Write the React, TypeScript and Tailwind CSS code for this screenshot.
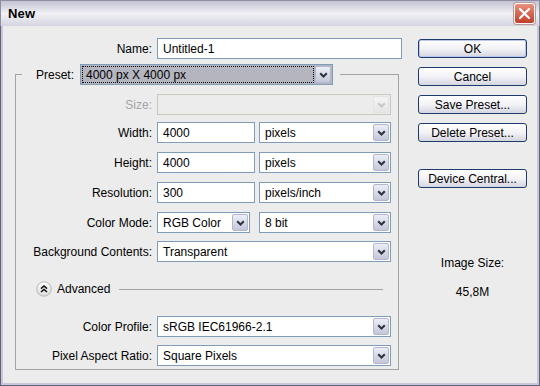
const Chevron = ({ disabled = false }: { disabled?: boolean }) => (
    <svg width="9" height="6" viewBox="0 0 9 6">
        <path d="M1.2 1.2 4.5 4.5 7.8 1.2" fill="none" stroke={disabled ? "#c6c6c6" : "#2f3140"} strokeWidth="2" />
    </svg>
);

const Select = ({
    value,
    className = "",
    disabled = false,
    focused = false,
}: {
    value?: string;
    className?: string;
    disabled?: boolean;
    focused?: boolean;
}) => {
    const frame = disabled ? "border-[#cac8bb] bg-[#ececec]" : focused ? "border-[#7f9db9] bg-[#b4b5be]" : "border-[#7f9db9] bg-white";
    const button = disabled
        ? "border-[#e2e2e2] bg-gradient-to-b from-[#f4f4f4] to-[#e6e6e6]"
        : "border-[#b3b6cc] bg-gradient-to-b from-[#eceef6] to-[#c4c7da]";
    return (
        <div className={`flex h-[21px] border ${frame} ${className}`}>
            <div className="flex-1 min-w-0 flex items-center p-[1px]">
                {focused ? (
                    <div className="flex-1 h-full flex items-center pl-[3px] border border-dotted border-black">{value}</div>
                ) : (
                    <span className="pl-[4px] whitespace-nowrap">{value}</span>
                )}
            </div>
            <div className={`w-[16px] my-[1px] mr-[1px] flex items-center justify-center border rounded-[2px] ${button}`}>
                <Chevron disabled={disabled} />
            </div>
        </div>
    );
};

const Input = ({ value, className = "" }: { value: string; className?: string }) => (
    <div className={`h-[21px] border border-[#7f9db9] bg-white flex items-center pl-[5px] ${className}`}>{value}</div>
);

const Row = ({
    label,
    disabled = false,
    children,
    className = "",
    labelClass = "w-[136px]",
}: {
    label: string;
    disabled?: boolean;
    children: React.ReactNode;
    className?: string;
    labelClass?: string;
}) => (
    <div className={`flex items-center ${className}`}>
        <div className={`${labelClass} text-right ${disabled ? "text-[#a6a6a6]" : ""}`}>{label}</div>
        <div className="flex gap-[4px] ml-[5px]">{children}</div>
    </div>
);

const Button = ({ label, className = "" }: { label: string; className?: string }) => (
    <div className={`h-[19px] w-[109px] flex items-center justify-center rounded-[3px] border border-[#1d3b6c] bg-gradient-to-b from-white via-[#f3f3f7] to-[#d5d5e0] ${className}`}>
        {label}
    </div>
);

export default function App() {
    return (
        <div className="w-[540px] h-[386px] flex flex-col bg-[#ececec] font-['Liberation_Sans',Arial,sans-serif] text-[12px] text-black overflow-hidden">
            <div className="h-[26px] shrink-0 flex items-center justify-between pl-[7px] pr-[4px] border-t border-x border-[#8e8ea6] bg-gradient-to-b from-[#c3c3d3] via-[#f1f1f6] to-[#d4d4e0]">
                <span className="font-bold text-[13px] tracking-[0.2px]">New</span>
                <div className="w-[21px] h-[21px] rounded-[3px] border border-white bg-gradient-to-b from-[#e9907d] to-[#c03d2a] flex items-center justify-center shadow-[0_0_0_1px_#b99a94]">
                    <svg width="13" height="13" viewBox="0 0 13 13">
                        <path d="M2 2 11 11M11 2 2 11" stroke="white" strokeWidth="2.2" strokeLinecap="round" />
                    </svg>
                </div>
            </div>

            <div className="flex-1 flex border-x border-b border-[#5f5f80]">
                <div className="flex-1 flex border-x-2 border-b-2 border-[#c7c7d6]">
                    <div className="w-[415px] flex flex-col">
                        <Row label="Name:" labelClass="w-[149px]" className="mt-[12px]">
                            <Input value="Untitled-1" className="w-[245px]" />
                        </Row>

                        <fieldset className="ml-[12px] w-[384px] mt-[5px] border border-[#a3a3a3] pb-[3px]">
                            <legend className="ml-[6px] pl-[14px] pr-[7px] flex items-center gap-[6px]">
                                <span>Preset:</span>
                                <Select value="4000 px X 4000 px" focused className="w-[253px]" />
                            </legend>

                            <div className="flex flex-col">
                                <Row label="Size:" disabled className="mt-[9px]">
                                    <Select disabled className="w-[234px]" />
                                </Row>
                                <Row label="Width:" className="mt-[7px]">
                                    <Input value="4000" className="w-[98px]" />
                                    <Select value="pixels" className="w-[132px]" />
                                </Row>
                                <Row label="Height:" className="mt-[9px]">
                                    <Input value="4000" className="w-[98px]" />
                                    <Select value="pixels" className="w-[132px]" />
                                </Row>
                                <Row label="Resolution:" className="mt-[9px]">
                                    <Input value="300" className="w-[98px]" />
                                    <Select value="pixels/inch" className="w-[132px]" />
                                </Row>
                                <Row label="Color Mode:" className="mt-[9px]">
                                    <Select value="RGB Color" className="w-[93px]" />
                                    <Select value="8 bit" className="w-[132px] ml-[5px]" />
                                </Row>
                                <Row label="Background Contents:" className="mt-[8px]">
                                    <Select value="Transparent" className="w-[234px]" />
                                </Row>

                                <div className="mt-[19px] h-[16px] flex items-center pl-[20px] pr-[15px]">
                                    <svg width="16" height="16" viewBox="0 0 16 16">
                                        <defs>
                                            <linearGradient id="adv" x1="0" y1="0" x2="0" y2="1">
                                                <stop offset="0" stopColor="#ffffff" />
                                                <stop offset="1" stopColor="#dcdcdc" />
                                            </linearGradient>
                                        </defs>
                                        <circle cx="8" cy="8" r="7.2" fill="url(#adv)" stroke="#b4b4b4" />
                                        <path d="M5 7.6 8 5 11 7.6M5 11 8 8.4 11 11" fill="none" stroke="#111" strokeWidth="1.5" />
                                    </svg>
                                    <span className="ml-[5px]">Advanced</span>
                                    <div className="flex-1 ml-[9px] h-px bg-[#a3a3a3]" />
                                </div>

                                <Row label="Color Profile:" className="mt-[19px]">
                                    <Select value="sRGB IEC61966-2.1" className="w-[234px]" />
                                </Row>
                                <Row label="Pixel Aspect Ratio:" className="mt-[8px]">
                                    <Select value="Square Pixels" className="w-[234px]" />
                                </Row>
                            </div>
                        </fieldset>
                    </div>

                    <div className="w-[109px] flex flex-col items-center">
                        <Button label="OK" className="mt-[13px] shadow-[inset_0_0_0_1px_#b9c8ec]" />
                        <Button label="Cancel" className="mt-[9px]" />
                        <Button label="Save Preset..." className="mt-[9px]" />
                        <Button label="Delete Preset..." className="mt-[9px]" />
                        <Button label="Device Central..." className="mt-[27px]" />
                        <div className="mt-[66px]">Image Size:</div>
                        <div className="mt-[11px]">45,8M</div>
                    </div>
                </div>
            </div>
        </div>
    );
}
